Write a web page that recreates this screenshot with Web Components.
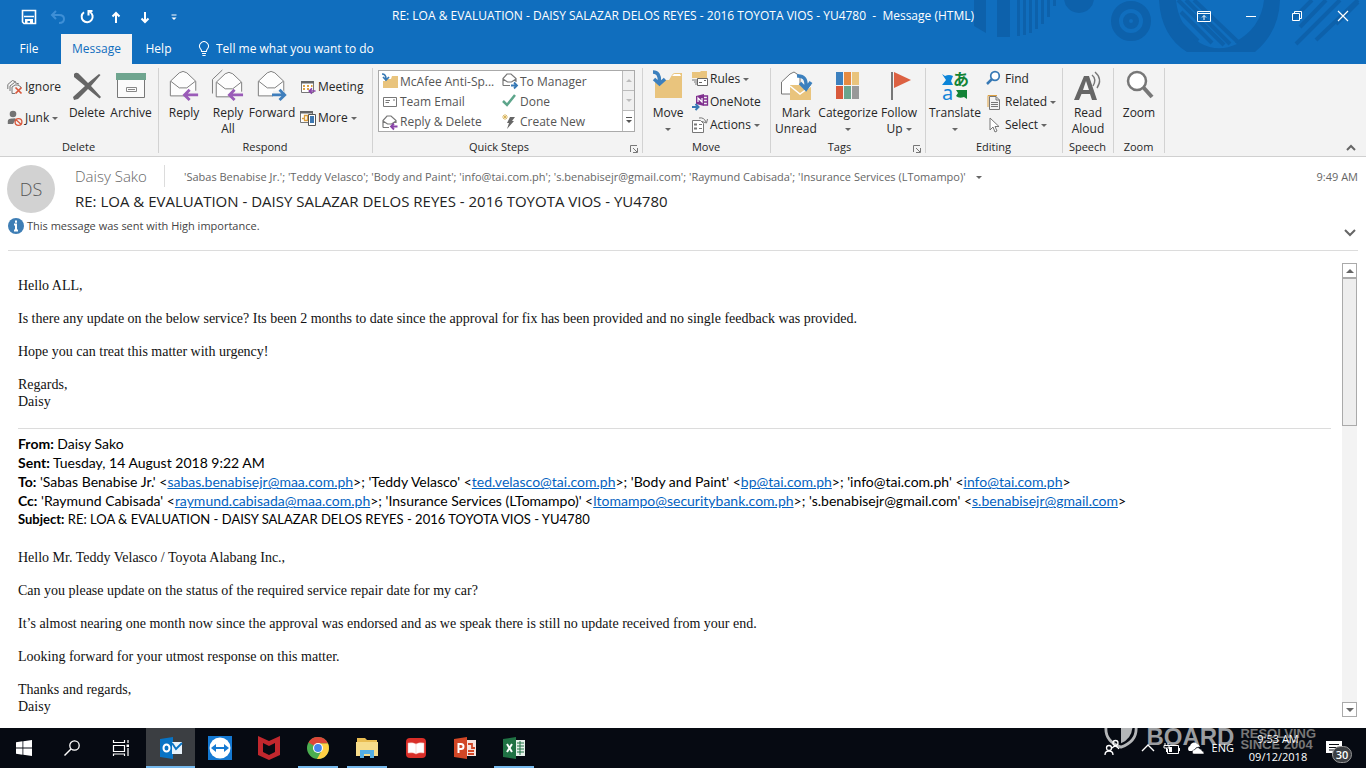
<!DOCTYPE html>
<html lang="en">
<head>
<meta charset="utf-8">
<title>RE: LOA &amp; EVALUATION - Message (HTML)</title>
<style>
html, body { margin: 0; height: 100%; }
body { font: 12px/16px "Open Sans", "Noto Sans", sans-serif; color: #262626; background: #fff; overflow: hidden; }
</style>
</head>
<body>
<mail-window></mail-window>
<script>
const define = (name, css, markup) => {
  const template = document.createElement('template');
  template.innerHTML = `<style>*{box-sizing:border-box}button,input{font:inherit;color:inherit;background:none;border:0;padding:0;margin:0}button{cursor:pointer}${css}</style>${markup}`;
  customElements.define(name, class extends HTMLElement {
    constructor() {
      super();
      this.attachShadow({ mode: 'open' }).append(template.content.cloneNode(true));
    }
  });
};

const open32 = `<path d="M2.500 12 12 3Q16 0 20 3L29.500 12V27.500H2.500Z" fill="#fdfdfd" stroke="#777"/><path d="M3 12 12 19H20L29 12" fill="none" stroke="#777"/>`;
const icons = {
  save: ['0 0 16 16', '<path d="M1.500 1.500H14.500V14.500H3L1.500 13Z" fill="none" stroke="#fff" stroke-width="1.600"/><path d="M3 7.500H13" stroke="#fff" stroke-width="1.500"/><path d="M4 10H12V15H9V12H6.500V15H4Z" fill="#fff"/>'],
  undo: ['0 0 16 16', '<path d="M6 2 2 6 6 10M2 6H9Q14 6 14 10T9 14" fill="none" stroke="#3e8fd6" stroke-width="2"/>'],
  redo: ['0 0 16 16', '<path d="M11 3A5.500 5.500 0 1 1 5 3.200M13.500 2H9.500V6.500" fill="none" stroke="#fff" stroke-width="2"/>'],
  up: ['0 0 16 16', '<path d="M8 14V4M4.500 7.500 8 4 11.500 7.500" fill="none" stroke="#fff" stroke-width="2"/>'],
  down: ['0 0 16 16', '<path d="M8 3V13M4.500 9.500 8 13 11.500 9.500" fill="none" stroke="#fff" stroke-width="2"/>'],
  custom: ['0 0 16 16', '<path d="M5.500 6H10.500" stroke="#fff"/><path d="M5.500 8.500H10.500L8 11Z" fill="#fff"/>'],
  bulb: ['0 0 16 20', '<path d="M5 13Q5 11 3.500 9.500A5.500 5.500 0 1 1 12.500 9.500Q11 11 11 13ZM5.500 15.500H10.500M6 18H10" fill="none" stroke="#fff" stroke-width="1.300"/>'],
  ribbonopt: ['0 0 14 12', '<path d="M.5 1.500H13.500V11.500H.5ZM.5 3.500H13.500M7 10V5.500M5 7.500 7 5.500 9 7.500" fill="none" stroke="#fff"/>'],
  minimize: ['0 0 12 12', '<path d="M1 6.500H11" stroke="#fff"/>'],
  restore: ['0 0 12 12', '<path d="M1.500 3.500H8.500V10.500H1.500ZM3.500 3V1.500H10.500V8.500H9" fill="none" stroke="#fff"/>'],
  close: ['0 0 12 12', '<path d="M1 1 11 11M11 1 1 11" stroke="#fff" stroke-width="1.200"/>'],
  ignore: ['0 0 16 16', '<path d="M.8 10V5.500L5.500 1.500 9 3M3 12V7L7.500 3.500 12 5M5 14.500V8L8 6H11L14 8V9M5 14.500H8" fill="none" stroke="#777"/><path d="M8.500 8.500 14.500 14.500M14.500 8.500 8.500 14.500" stroke="#d8573b" stroke-width="1.700"/>'],
  junk: ['0 0 16 16', '<circle cx="6" cy="4" r="3.300" fill="#737373"/><path d="M.8 14V11Q1 8 6 8.500 8 8 9 9L6 14Z" fill="#737373"/><circle cx="11.500" cy="12" r="3.400" fill="#f3f3f3" stroke="#d8573b" stroke-width="1.300"/><path d="M9 9.700 14 14.300" stroke="#d8573b" stroke-width="1.300"/>'],
  delete: ['0 0 32 32', '<path d="M3 4Q6 1 9 5L17 13 28 4 29.500 5 20 16 30 27 28.500 28.500 17 19 7 29 3 30 2 27 14 16 3 7Z" fill="#666"/>'],
  archive: ['0 0 32 32', '<path d="M2.500 9H29.500V27.500H2.500Z" fill="#fbfbfb" stroke="#777"/><path d="M1 3H31V10H1Z" fill="#6fa58f"/><path d="M11.500 17.500H21.500V21.500H11.500ZM13 19.500H20" fill="none" stroke="#888"/>'],
  reply: ['0 0 34 34', `${open32}<path d="M20 22H32V30H20Z" fill="#f3f3f3"/><path d="M32 26.500H18M23 21 17.500 26.500 23 32" fill="none" stroke="#9a5bb8" stroke-width="3"/>`],
  replyall: ['0 0 34 34', `<path d="M.5 25V10L11 0" fill="none" stroke="#777"/><g transform="translate(2 1)">${open32}</g><path d="M20 23H33V31H20Z" fill="#f3f3f3"/><path d="M33 26.500H19M24 21 18.500 26.500 24 32" fill="none" stroke="#9a5bb8" stroke-width="3"/>`],
  forward: ['0 0 34 34', `${open32}<path d="M18 22H30V30H18Z" fill="#f3f3f3"/><path d="M17 26.500H30M25 21 30.500 26.500 25 32" fill="none" stroke="#3f7ebc" stroke-width="3"/>`],
  meeting: ['0 0 16 16', '<path d="M1.500 2.500H13.500V13.500H1.500Z" fill="#fff" stroke="#777"/><path d="M1 2H14V4.500H1Z" fill="#666"/><path d="M3 7H5M3 10H5M7 7H9M7 10H9M11 7H12.500" stroke="#dda040" stroke-width="2"/><path d="M15.500 12H9.500M12 9.300 9.300 12 12 14.700" fill="none" stroke="#8944a8" stroke-width="1.700"/>'],
  more: ['0 0 16 16', '<path d="M.5 1.500H12.500V12.500H.5Z" fill="#fff" stroke="#777"/><path d="M0 1H13V3.500H0Z" fill="#666"/><path d="M2 8.500H4.500M4.500 5.500H7.500V10.500H4.500Z" fill="none" stroke="#dda040" stroke-width="1.300"/><path d="M8.500 4.500H15.500V15.500H8.500Z" fill="#fff" stroke="#555"/><path d="M10 6H14V13H10Z" fill="#3e78b2"/>'],
  folderin: ['0 0 16 16', '<path d="M3 5H9L10 2H16V14H1V7H3Z" fill="#e9c47d"/><path d="M0 0Q4 0 4 5M1 3 4 6 7 3" fill="none" stroke="#3779b5" stroke-width="1.700"/>'],
  teammail: ['0 0 16 16', '<path d="M1.500 3.500H14.500V12.500H1.500Z" fill="#fff" stroke="#777"/><path d="M3.500 6.500H8M3.500 8.500H7M11 6H13" stroke="#777"/>'],
  replydel: ['0 0 16 16', '<path d="M1 13.500V6.500L5 2H9L14 6.500V9M1 13.500H7M1 7 5.500 10H9.500L14 7" fill="none" stroke="#777" stroke-width="1.200"/><path d="M15.500 12.500H9M12 9.500 9 12.500 12 15.500" fill="none" stroke="#8944a8" stroke-width="1.800"/>'],
  tomanager: ['0 0 16 16', '<path d="M1 11.500V4.500L5 0H9L14 4.500V8M1 11.500H8M1 5 5.500 8H9.500L14 5" fill="none" stroke="#777" stroke-width="1.200"/><path d="M9 11.500H15M12 8.500 15 11.500 12 14.500" fill="none" stroke="#3779b5" stroke-width="1.800"/>'],
  done: ['0 0 16 16', '<path d="M1 7 5 11 13 1" fill="none" stroke="#5da58b" stroke-width="2.500"/>'],
  bolt: ['0 0 16 16', '<path d="M8 3H13L10 7H12L5 15 7 9H5Z" fill="#666"/><path d="M3 0V6M0 3H6M1 1 5 5M5 1 1 5" stroke="#d4ac4a" stroke-width=".8"/>'],
  move: ['0 0 32 32', '<path d="M3 10H17L20 5Q21 3 23 3H30V28H3Z" fill="#e9c47d"/><path d="M20 6 22 4H28L29 6Z" fill="#fff"/><path d="M1 2Q8 2 7.500 12M2 9 7.500 14 13 9" fill="none" stroke="#3c80be" stroke-width="3.500"/>'],
  rules: ['0 0 16 16', '<path d="M0 1H8L9 0H15V7H0Z" fill="#e9c47d"/><path d="M0 9H5M2 11H5M3 13H5" stroke="#777"/><path d="M5.500 7.500H15.500V14.500H5.500Z" fill="#fff" stroke="#666"/><path d="M7 11.500H10M12 9.500H14" stroke="#666"/>'],
  onenote: ['0 0 16 16', '<path d="M4 2 12 0V12L4 10Z" fill="#80308f"/><path d="M6 8V4L10 8V4" fill="none" stroke="#fff" stroke-width="1.200"/><path d="M12 2H15.500V11H12M12 5H15M12 8H15" fill="none" stroke="#80308f" stroke-width="1.300"/><path d="M0 13H6M3.500 10 6.500 13 3.500 16" fill="none" stroke="#3779b5" stroke-width="2"/>'],
  actions: ['0 0 16 16', '<path d="M.5 3.500H8.500L11.500 6.500V15.500H.5Z" fill="#fff" stroke="#777"/><path d="M2 7.500H5M2 11.500H5" stroke="#777" stroke-width="2"/><path d="M7 7.500H10M7 11.500H10" stroke="#777"/><path d="M7 1Q12 0 14 5M10 4.500 14.500 6 15.500 2" fill="none" stroke="#777"/>'],
  unread: ['0 0 32 32', '<path d="M1.500 12 10 4 14 2 20 6V24H1.500Z" fill="#fff" stroke="#777"/><path d="M10 15H31V30H10Z" fill="#e9c47d"/><path d="M10 16 20 24 31 16" fill="none" stroke="#fff" stroke-width="1.500"/><path d="M17 6Q27 5 26 17M20 13 26 19 31 12" fill="none" stroke="#3c80be" stroke-width="3.500"/>'],
  categorize: ['0 0 32 32', '<path d="M4 2H11V15H4Z" fill="#3c80be"/><path d="M12 2H19V15H12Z" fill="#e58b42"/><path d="M20 2H27V15H20Z" fill="#e9c47d"/><path d="M4 16H11V29H4Z" fill="#d8593b"/><path d="M12 16H19V29H12Z" fill="#6aa58e"/><path d="M20 16H27V29H20Z" fill="#999"/>'],
  flag: ['0 0 32 32', '<path d="M9 2V30" stroke="#777" stroke-width="2"/><path d="M11 2 28 10 11 18Z" fill="#dc6142"/>'],
  translate: ['0 0 32 32', '<path d="M3 4 6 6Q10 4 14 6L12 11 14 15H3L7 10Z" fill="#0b84d8"/><path d="M28 29 25 27Q20 29 17 26L19 23 17 20H28Z" fill="#128336"/><text x="3" y="30" font-family="Noto Sans" font-size="20" fill="#1684d7">a</text><text x="14" y="15" font-family="Noto Sans CJK JP" font-weight="700" font-size="16" fill="#128336">あ</text>'],
  find: ['0 0 16 16', '<circle cx="8" cy="5" r="4.300" fill="#fff" stroke="#3779b5" stroke-width="1.700"/><path d="M5 8 0 13" stroke="#3779b5" stroke-width="2.500"/>'],
  related: ['0 0 16 16', '<path d="M1 13V1.500H10" fill="none" stroke="#dda040"/><path d="M2.500 2.500H9L12.500 6V15.500H2.500ZM9 2.500V6H12.500M4 8.500H11M4 10.500H11M4 12.500H11" fill="none" stroke="#777"/>'],
  select: ['0 0 16 16', '<path d="M3 1V13L6 10 8 15 10 14 8 9.500H12Z" fill="#fff" stroke="#777"/>'],
  readaloud: ['0 0 32 32', '<path d="M2 30 12 6H17L25 30H20L18 24H9.500L7 30ZM11 20H17L14 11Z" fill="#666"/><path d="M20 5Q25 9 21 16M23 2Q31 9 25 18" fill="none" stroke="#777" stroke-width="1.400"/>'],
  zoom: ['0 0 32 32', '<circle cx="14" cy="11" r="9" fill="#fff" stroke="#777" stroke-width="2.500"/><path d="M20 17 29 27" stroke="#777" stroke-width="4"/>'],
  launcher: ['0 0 8 8', '<path d="M.5 7V.5H7M3 3 7 7M7.500 3V7.500H3" fill="none" stroke="#777"/>'],
  chevup: ['0 0 12 12', '<path d="M2 8 6 4 10 8" fill="none" stroke="#666" stroke-width="2"/>'],
  chevdown: ['0 0 12 12', '<path d="M1 4 6 9 11 4" fill="none" stroke="#666" stroke-width="2"/>'],
  info: ['0 0 16 16', '<circle cx="8" cy="8" r="8" fill="#3e7eb5"/><path d="M8 2.500V4.700M6 6.500H8V12M6 12.500H10" fill="none" stroke="#fff" stroke-width="2"/>'],
  windows: ['0 0 16 16', '<path d="M0 2.200 6.500 1.300V7.500H0ZM7.300 1.200 16 0V7.500H7.300ZM0 8.400H6.500V14.700L0 13.800ZM7.300 8.400H16V16L7.300 14.800Z" fill="#fff"/>'],
  search: ['0 0 16 16', '<circle cx="10.500" cy="5.500" r="4.700" fill="none" stroke="#fff" stroke-width="1.300"/><path d="M7 9 .5 15.500" stroke="#fff" stroke-width="1.500"/>'],
  tasks: ['0 0 16 16', '<path d="M.5 0V2.500H11.500V0M.5 5.500H11.500V11.500H.5ZM.5 16V14H11.500V16M15 0V3M15 8V16" fill="none" stroke="#fff" stroke-width="1.200"/><path d="M13.500 4.500H16V7H13.500Z" fill="#fff"/>'],
  outlook: ['0 0 24 24', '<path d="M1 3 14 1V23L1 21Z" fill="#0873c4"/><path d="M13 6H23V18H13Z" fill="#e8f2fa"/><path d="M13 7 17 13 23 7" fill="none" stroke="#0873c4" stroke-width="1.800"/><ellipse cx="7.500" cy="12" rx="3" ry="3.600" fill="none" stroke="#fff" stroke-width="2"/>'],
  teamviewer: ['0 0 24 24', '<path d="M0 0H24V24H0Z" fill="#1479d2"/><circle cx="12" cy="12" r="10.500" fill="#fff"/><path d="M3 12 8 8V11H16V8L21 12 16 16V13H8V16Z" fill="#1479d2"/>'],
  mcafee: ['0 0 24 24', '<path d="M1 0 12 5 23 0V19L12 24 1 19ZM6 7V16L12 19 18 16V7L12 10Z" fill="#c1272d" fill-rule="evenodd"/>'],
  chrome: ['0 0 24 24', '<circle cx="12" cy="12" r="11" fill="#4bae50"/><path d="M12 12 2.500 6.500A11 11 0 0 1 22 7.500H12Z" fill="#dc4638"/><path d="M12 7.500H22A11 11 0 0 1 11 23L16 14Z" fill="#ffd044"/><circle cx="12" cy="12" r="5" fill="#fff"/><circle cx="12" cy="12" r="3.900" fill="#4485ed"/>'],
  explorer: ['0 0 24 24', '<path d="M2 2H10L12 4H22V19H2Z" fill="#e9bd52"/><path d="M1 6H23V20H1Z" fill="#f6dc8a"/><path d="M5 14H19V22H15V18H9V22H5Z" fill="#54aee3"/>'],
  reader: ['0 0 24 24', '<rect x="2" y="2" width="20" height="20" rx="4" fill="#d92e28"/><path d="M4 7Q9 6 12 8 15 6 20 7V17Q15 16 12 18 9 16 4 17ZM12 8V17" fill="#fff" stroke="#f0b0a8" stroke-width=".5"/>'],
  powerpoint: ['0 0 24 24', '<path d="M1 3 14 1V23L1 21Z" fill="#d24726"/><path d="M14 4H23V20H14Z" fill="#f7e3de"/><path d="M15 8H19V12H22M15 15H21M15 18H21" fill="none" stroke="#d24726" stroke-width="1.800"/><path d="M5.500 17V8H8Q10.500 8 10.500 10.500T8 13H5.500" fill="none" stroke="#fff" stroke-width="2"/>'],
  excel: ['0 0 24 24', '<path d="M1 3 14 1V23L1 21Z" fill="#1f7244"/><path d="M14 4H23V20H14Z" fill="#e6f1ea"/><path d="M15 7H22M15 10H22M15 13H22M15 16H22M18 5V19" stroke="#1f7244"/><path d="M5 8 10 16M10 8 5 16" stroke="#fff" stroke-width="2"/>'],
  people: ['0 0 16 16', '<circle cx="5" cy="8" r="2.500" fill="none" stroke="#fff" stroke-width="1.300"/><path d="M1 15Q1 11 5 11T9 15" fill="none" stroke="#fff" stroke-width="1.300"/><circle cx="11.500" cy="3" r="2.500" fill="none" stroke="#fff" stroke-width="1.300"/><path d="M8 8Q12 4 15 9" fill="none" stroke="#fff" stroke-width="1.300"/>'],
  traychev: ['0 0 16 16', '<path d="M2 11 8 5 14 11" fill="none" stroke="#fff" stroke-width="1.400"/>'],
  battery: ['0 0 16 16', '<path d="M5 5.500H14.500V13.500H3.500V9M15.500 8V11" fill="none" stroke="#fff"/><path d="M5 7H8V12H5Z" fill="#fff"/><path d="M1 3V5M4 3V5M0 5.500H5V8H0ZM2.500 8V12" fill="#080b12" stroke="#fff"/>'],
  cloud: ['0 0 16 16', '<path d="M1 11A3 3 0 0 1 2 6 4 4 0 0 1 9 4Q12 5 12 7 8 6 6 11Z" fill="#fff"/><path d="M5 14Q3 10 7 9.500 9 6 12 9 14 9 14 11 16 11 16 14Z" fill="#fff" stroke="#080b12" stroke-width=".5"/>'],
  notes: ['0 0 16 16', '<path d="M0 1H16V13H9L6 16V13H0Z" fill="#fff"/><path d="M3 4.500H13M3 7.500H13M3 10H9" stroke="#080b12"/>'],
  shield: ['0 0 36 36', '<path d="M2 0V15Q2 28 18 34 34 28 34 15V0" fill="none" stroke="#b4b6b8" stroke-width="3"/><path d="M18 0H30V14Q29 25 18 30Z" fill="#b4b6b8"/>']
};

/* <ui-icon name="..."> draws one glyph; its box is set by --size */
customElements.define('ui-icon', class extends HTMLElement {
  connectedCallback() {
    if (this.shadowRoot) return;
    const [box, art] = icons[this.getAttribute('name')];
    this.attachShadow({ mode: 'open' }).innerHTML =
      `<style>:host{display:block;flex:none;width:var(--size,16px);height:var(--size,16px)}svg{display:block;width:100%;height:100%;overflow:visible}</style><svg viewBox="${box}" aria-hidden="true">${art}</svg>`;
  }
});

define('drop-caret', `:host{display:inline-block;vertical-align:middle;border:3px solid transparent;border-top-color:#666;border-bottom:0}`, '');

/* Ribbon parts */
define('ribbon-group', `
:host{display:flex;flex-direction:column;flex:none;height:85px;border-right:1px solid #d2d2d2;position:relative}
.body{flex:1;display:flex;padding:1px 0 0 1px}
footer{text-align:center;font-size:11px;line-height:16px;height:14px;padding-right:1px}
.launch{position:absolute;right:4px;bottom:0;display:none;--size:8px}
:host([launcher]) .launch{display:block}
:host([launcher]) footer{padding-right:17px}`,
`<div class="body"><slot></slot></div><footer><slot name="title"></slot></footer><button class="launch" aria-label="More options"><ui-icon name="launcher"></ui-icon></button>`);

customElements.define('big-button', class extends HTMLElement {
  connectedCallback() {
    if (this.shadowRoot) return;
    this.attachShadow({ mode: 'open' }).innerHTML = `<style>
      :host{display:block;flex:none}
      button{font:inherit;color:inherit;background:none;border:0;padding:1px 0 0;width:100%;display:flex;flex-direction:column;align-items:center;gap:3px;line-height:16px;white-space:nowrap}
      ui-icon{--size:32px}</style><button><ui-icon name="${this.getAttribute('icon')}"></ui-icon><span><slot></slot></span></button>`;
  }
});
customElements.define('small-button', class extends HTMLElement {
  connectedCallback() {
    if (this.shadowRoot) return;
    this.attachShadow({ mode: 'open' }).innerHTML = `<style>
      :host{display:block}
      button{font:inherit;color:inherit;background:none;border:0;padding:0;display:flex;align-items:center;gap:2px;height:20px;white-space:nowrap}
      </style><button><ui-icon name="${this.getAttribute('icon')}"></ui-icon><span><slot></slot></span></button>`;
  }
});
define('button-stack', `:host{display:flex;flex-direction:column;gap:3px}:host([two]){gap:11px;padding-top:8px}`, `<slot></slot>`);

define('steps-gallery', `
:host{display:flex;width:257px;height:62px;margin:1px 0 0 4px;border:1px solid #aaa;background:#fff;color:#555}
.list{flex:1;display:grid;grid-template-columns:120px 120px;grid-auto-rows:20px;padding:1px 0 0 3px}
.nav{width:16px;display:grid;grid-template-rows:1fr 1fr 1fr;border-left:1px solid #bbb}
.nav button{display:grid;place-items:center;background:#f0f0f0;border-bottom:1px solid #bbb}
.nav button:last-child{background:#fff;border:0}
i{border:3px solid transparent}
.u{border-bottom-color:#bbb;border-top:0}.d{border-top-color:#bbb;border-bottom:0}
.m{border-top-color:#555;border-bottom:0;position:relative}
.m::before{content:"";position:absolute;left:-3px;top:-6px;width:6px;height:1px;background:#555}`,
`<div class="list">
<small-button icon="folderin">McAfee Anti-Sp...</small-button><small-button icon="tomanager">To Manager</small-button>
<small-button icon="teammail">Team Email</small-button><small-button icon="done">Done</small-button>
<small-button icon="replydel">Reply &amp; Delete</small-button><small-button icon="bolt">Create New</small-button>
</div><div class="nav"><button aria-label="Previous"><i class="u"></i></button><button aria-label="Next"><i class="d"></i></button><button aria-label="All steps"><i class="m"></i></button></div>`);

define('title-bar', `
:host{display:block;height:64px;background:#106ebe;color:#fff;position:relative;overflow:hidden}
.art{position:absolute;top:0;right:0;width:406px;height:64px}
.top{position:relative;display:grid;grid-template-columns:1fr auto 1fr;height:34px;align-items:center}
.quick{display:flex;gap:13px;padding-left:21px}
.win{display:flex;justify-content:flex-end;align-items:center;gap:34px;padding-right:17px;padding-bottom:3px;--size:12px}
.win button:first-child{--size:14px}
h1{font:inherit;margin:0;padding-bottom:2px;white-space:nowrap}
nav{position:relative;display:flex;height:30px;align-items:stretch}
nav button{width:53px}
nav .file{width:61px;padding-right:3px}
nav .on{width:71px;background:#f3f3f3;color:#106ebe}
label{display:flex;align-items:center;gap:4px;margin-left:11px;flex:1}
input{width:240px;outline:0}
input::placeholder{color:#fff;opacity:1}`,
`<svg class="art" viewBox="0 0 406 64" aria-hidden="true"><g fill="#0d61ab"><path d="M14 0H26V33L14 26ZM37 0H50V37H37ZM57 0H60V36H57ZM63 0H66V35H63ZM69 0H72V33H69ZM75 0H78V29H75ZM81 0H84V24H81ZM87 0H90V17H87ZM93 0H96V6H93Z"/><circle cx="119" cy="-2" r="15"/></g>
<circle cx="171" cy="21" r="16" fill="none" stroke="#0d61ab" stroke-width="8"/><circle cx="171" cy="21" r="5" fill="none" stroke="#0d61ab" stroke-width="6"/>
<path d="M199 0Q201 36 227 52H295Q319 32 320 0H304Q301 28 275 42L231 0H216Q218 25 240 43Q258 53 277 44L231 0Z" fill="#0d61ab" fill-rule="evenodd"/>
<path d="M218 0 264 45M226 0 270 44M234 0 278 42M221 12 252 43M220 23 238 41" stroke="#0d61ab" stroke-width="4"/>
<path d="M352 0 332 20M366 0 340 27M380 0 336 44M398 0 356 40M376 24 398 2" stroke="#0d61ab" stroke-width="4"/></svg>
<div class="top"><div class="quick"><button aria-label="Save"><ui-icon name="save"></ui-icon></button><button aria-label="Undo"><ui-icon name="undo"></ui-icon></button><button aria-label="Redo"><ui-icon name="redo"></ui-icon></button><button aria-label="Previous item"><ui-icon name="up"></ui-icon></button><button aria-label="Next item"><ui-icon name="down"></ui-icon></button><button aria-label="Customize"><ui-icon name="custom"></ui-icon></button></div>
<h1>RE: LOA &amp; EVALUATION - DAISY SALAZAR DELOS REYES - 2016 TOYOTA VIOS - YU4780 &nbsp;- &nbsp;Message (HTML)</h1>
<div class="win"><button aria-label="Ribbon options"><ui-icon name="ribbonopt"></ui-icon></button><button aria-label="Minimize"><ui-icon name="minimize"></ui-icon></button><button aria-label="Restore"><ui-icon name="restore"></ui-icon></button><button aria-label="Close"><ui-icon name="close"></ui-icon></button></div></div>
<nav><button class="file">File</button><button class="on">Message</button><button>Help</button><label><ui-icon name="bulb"></ui-icon><input type="text" aria-label="Tell me what you want to do" placeholder="Tell me what you want to do"></label></nav>`);

define('mail-ribbon', `
:host{display:flex;height:93px;padding-top:4px;background:#f3f3f3;border-bottom:1px solid #d0d0d0;position:relative}
.fold{position:absolute;right:9px;bottom:2px;--size:12px}
.w40{width:40px}.w46{width:46px}.w48{width:48px}.w56{width:56px}
.g1{width:159px}.g2{width:214px}.g3{width:270px}.g4{width:128px}.g5{width:155px}.g6{width:137px}.g7{width:51px}
.lead{width:66px;padding-left:6px}.trail{padding-left:4px}`,
`<ribbon-group class="g1"><button-stack two class="lead"><small-button icon="ignore">Ignore</small-button><small-button icon="junk">Junk <drop-caret></drop-caret></small-button></button-stack><big-button class="w40" icon="delete">Delete</big-button><big-button class="w48" icon="archive">Archive</big-button><span slot="title">Delete</span></ribbon-group>
<ribbon-group class="g2"><big-button class="w48" icon="reply">Reply</big-button><big-button class="w40" icon="replyall">Reply<br>All</big-button><big-button class="w48" icon="forward">Forward</big-button><button-stack two class="trail"><small-button icon="meeting">Meeting</small-button><small-button icon="more">More <drop-caret></drop-caret></small-button></button-stack><span slot="title">Respond</span></ribbon-group>
<ribbon-group class="g3" launcher><steps-gallery></steps-gallery><span slot="title">Quick Steps</span></ribbon-group>
<ribbon-group class="g4"><big-button class="w48" icon="move">Move<br><drop-caret></drop-caret></big-button><button-stack><small-button icon="rules">Rules <drop-caret></drop-caret></small-button><small-button icon="onenote">OneNote</small-button><small-button icon="actions">Actions <drop-caret></drop-caret></small-button></button-stack><span slot="title">Move</span></ribbon-group>
<ribbon-group class="g5" launcher><big-button class="w48" icon="unread">Mark<br>Unread</big-button><big-button class="w56" icon="categorize">Categorize<br><drop-caret></drop-caret></big-button><big-button class="w46" icon="flag">Follow<br>Up <drop-caret></drop-caret></big-button><span slot="title">Tags</span></ribbon-group>
<ribbon-group class="g6"><big-button class="w56" icon="translate">Translate<br><drop-caret></drop-caret></big-button><button-stack class="trail"><small-button icon="find">Find</small-button><small-button icon="related">Related <drop-caret></drop-caret></small-button><small-button icon="select">Select <drop-caret></drop-caret></small-button></button-stack><span slot="title">Editing</span></ribbon-group>
<ribbon-group class="g7"><big-button class="w48" icon="readaloud">Read<br>Aloud</big-button><span slot="title">Speech</span></ribbon-group>
<ribbon-group class="g7"><big-button class="w48" icon="zoom">Zoom</big-button><span slot="title">Zoom</span></ribbon-group>
<button class="fold" aria-label="Collapse ribbon"><ui-icon name="chevup"></ui-icon></button>`);

define('message-header', `
:host{display:block;margin:0 8px;padding:8px 0 0;border-bottom:1px solid #dcdcdc;height:94px;color:#444}
.main{display:grid;grid-template-columns:48px 1fr;column-gap:20px;margin-left:-1px}
.avatar{width:48px;height:48px;border-radius:50%;background:#d2d2d2;color:#555;display:grid;place-items:center;font-size:18px;font-weight:300}
.people{display:flex;align-items:center;height:22px;color:#666}
.from{font-size:15px;font-weight:300;line-height:22px;width:90px;border-right:1px solid #dcdcdc}
.to{flex:1;padding:2px 0 0 19px;font-size:11px;white-space:nowrap;display:flex;align-items:center;gap:10px}
time{font-size:11px;padding-top:2px}
h2{font-size:15px;font-weight:400;line-height:20px;margin:4px 0 0;color:#222}
.note{display:flex;align-items:flex-start;justify-content:space-between;margin-top:5px;font-size:11px}
.note span{display:flex;align-items:center;gap:3px}
.note button{--size:12px;padding:8px 2px 0 0}`,
`<div class="main"><div class="avatar">DS</div><div><div class="people"><span class="from">Daisy Sako</span><span class="to">'Sabas Benabise Jr.'; 'Teddy Velasco'; 'Body and Paint'; 'info@tai.com.ph'; 's.benabisejr@gmail.com'; 'Raymund Cabisada'; 'Insurance Services (LTomampo)' <drop-caret></drop-caret></span><time>9:49 AM</time></div><h2>RE: LOA &amp; EVALUATION - DAISY SALAZAR DELOS REYES - 2016 TOYOTA VIOS - YU4780</h2></div></div>
<div class="note"><span><ui-icon name="info"></ui-icon>This message was sent with High importance.</span><button aria-label="Expand header"><ui-icon name="chevdown"></ui-icon></button></div>`);

define('scroll-rail', `
:host{display:flex;flex-direction:column;width:15px;background:#f3f3f3}
button{flex:none;height:15px;border:1px solid #aaa;background:#fff;display:grid;place-items:center}
i{border:4px solid transparent}.u{border-bottom-color:#666;border-top:0}.d{border-top-color:#666;border-bottom:0}
.thumb{height:148px;background:#eee;border:1px solid #aaa}.gap{flex:1}`,
`<button aria-label="Scroll up"><i class="u"></i></button><div class="thumb"></div><div class="gap"></div><button aria-label="Scroll down"><i class="d"></i></button>`);

define('message-body', `
:host{display:flex;min-height:0;padding:12px 9px 11px 18px;gap:11px;color:#111;overflow:hidden}
article{flex:1;font:14px/17px "Liberation Serif",serif;padding-top:14px;min-width:0}
p{margin:0 0 16px}
.quoted{font:14px/19px Lato,sans-serif;margin:18px 0 20px;padding-top:5px;border-top:1px solid #dcdcdc;color:#000}
.quoted div{white-space:nowrap}
.quoted .subject{font-size:13px}
a{color:#0563c1}`,
`<article><p>Hello ALL,</p><p>Is there any update on the below service? Its been 2 months to date since the approval for fix has been provided and no single feedback was provided.</p><p>Hope you can treat this matter with urgency!</p><p>Regards,<br>Daisy</p>
<div class="quoted"><div><b>From:</b> Daisy Sako</div><div><b>Sent:</b> Tuesday, 14 August 2018 9:22 AM</div>
<div><b>To:</b> 'Sabas Benabise Jr.' &lt;<a href="mailto:sabas.benabisejr@maa.com.ph">sabas.benabisejr@maa.com.ph</a>&gt;; 'Teddy Velasco' &lt;<a href="mailto:ted.velasco@tai.com.ph">ted.velasco@tai.com.ph</a>&gt;; 'Body and Paint' &lt;<a href="mailto:bp@tai.com.ph">bp@tai.com.ph</a>&gt;; 'info@tai.com.ph' &lt;<a href="mailto:info@tai.com.ph">info@tai.com.ph</a>&gt;</div>
<div><b>Cc:</b> 'Raymund Cabisada' &lt;<a href="mailto:raymund.cabisada@maa.com.ph">raymund.cabisada@maa.com.ph</a>&gt;; 'Insurance Services (LTomampo)' &lt;<a href="mailto:ltomampo@securitybank.com.ph">ltomampo@securitybank.com.ph</a>&gt;; 's.benabisejr@gmail.com' &lt;<a href="mailto:s.benabisejr@gmail.com">s.benabisejr@gmail.com</a>&gt;</div>
<div class="subject"><b>Subject:</b> RE: LOA &amp; EVALUATION - DAISY SALAZAR DELOS REYES - 2016 TOYOTA VIOS - YU4780</div></div>
<p>Hello Mr. Teddy Velasco / Toyota Alabang Inc.,</p><p>Can you please update on the status of the required service repair date for my car?</p><p>It’s almost nearing one month now since the approval was endorsed and as we speak there is still no update received from your end.</p><p>Looking forward for your utmost response on this matter.</p><p>Thanks and regards,<br>Daisy</p></article><scroll-rail></scroll-rail>`);

define('task-bar', `
:host{display:flex;justify-content:space-between;height:40px;background:#060a12;color:#fff;position:relative;overflow:hidden}
.apps,.tray{display:flex;align-items:stretch}
.apps button{width:49px;display:grid;place-items:center;--size:24px}
.apps .sys{--size:16px;width:48px}
.apps .last{width:50px}
.apps .on{background:#3b3e42;box-shadow:inset 0 -2px #76b9ed}
.apps .run{background:linear-gradient(#76b9ed,#76b9ed) center bottom/40px 2px no-repeat}
.mark{position:absolute;right:50px;top:0;display:flex;color:#9b9da0;height:20px}
.mark ui-icon{--size:34px;margin:-13px 8px 0 0}
.mark b{font:700 24px/18px "Liberation Sans",sans-serif;padding-right:6px}
.mark span{font:700 13px/11px "Liberation Sans",sans-serif;color:#777}
.tray{position:relative;align-items:center;gap:8px;padding-right:4px;font-size:11px}
.tray .first{margin-right:12px}
.clock{width:72px;text-align:center;line-height:18px}
.note{position:relative;margin:0 20px 0 4px}
.badge{position:absolute;left:6px;top:6px;width:20px;height:17px;border-radius:9px;background:#3c3f43;border:1px solid #999;line-height:15px;text-align:center;font-weight:600}`,
`<div class="apps"><button class="sys" aria-label="Start"><ui-icon name="windows"></ui-icon></button><button class="sys" aria-label="Search"><ui-icon name="search"></ui-icon></button><button class="sys last" aria-label="Task view"><ui-icon name="tasks"></ui-icon></button><button class="on" aria-label="Outlook"><ui-icon name="outlook"></ui-icon></button><button aria-label="TeamViewer"><ui-icon name="teamviewer"></ui-icon></button><button aria-label="McAfee"><ui-icon name="mcafee"></ui-icon></button><button class="run" aria-label="Chrome"><ui-icon name="chrome"></ui-icon></button><button class="run" aria-label="File Explorer"><ui-icon name="explorer"></ui-icon></button><button aria-label="Reader"><ui-icon name="reader"></ui-icon></button><button aria-label="PowerPoint"><ui-icon name="powerpoint"></ui-icon></button><button class="run" aria-label="Excel"><ui-icon name="excel"></ui-icon></button></div>
<div class="mark"><ui-icon name="shield"></ui-icon><b>BOARD</b><span>RESOLVING<br>SINCE 2004</span></div>
<div class="tray"><ui-icon class="first" name="people"></ui-icon><ui-icon name="traychev"></ui-icon><ui-icon name="battery"></ui-icon><ui-icon name="cloud"></ui-icon><span>ENG</span><div class="clock">9:53 AM<br>09/12/2018</div><div class="note"><ui-icon name="notes"></ui-icon><span class="badge">30</span></div></div>`);

define('mail-window', `:host{display:grid;grid-template-rows:auto auto auto minmax(0,1fr) auto;height:100vh}`,
`<title-bar></title-bar><mail-ribbon></mail-ribbon><message-header></message-header><message-body></message-body><task-bar></task-bar>`);
</script>
</body>
</html>
